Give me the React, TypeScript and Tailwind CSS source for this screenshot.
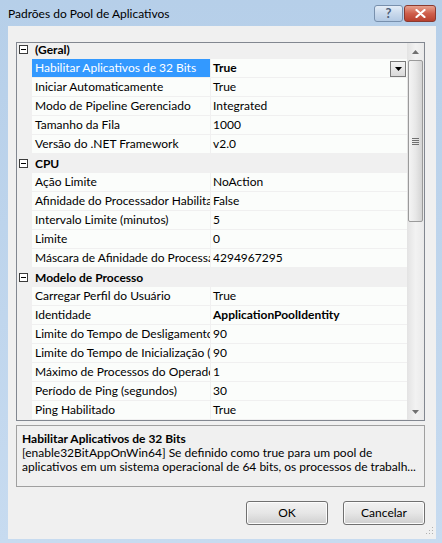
import React from "react"

interface Row {
  cat?: string
  name?: string
  value?: string
  bold?: boolean
  selected?: boolean
}

const rows: Row[] = [
  { cat: "(Geral)" },
  { name: "Habilitar Aplicativos de 32 Bits", value: "True", bold: true, selected: true },
  { name: "Iniciar Automaticamente", value: "True" },
  { name: "Modo de Pipeline Gerenciado", value: "Integrated" },
  { name: "Tamanho da Fila", value: "1000" },
  { name: "Versão do .NET Framework", value: "v2.0" },
  { cat: "CPU" },
  { name: "Ação Limite", value: "NoAction" },
  { name: "Afinidade do Processador Habilitada", value: "False" },
  { name: "Intervalo Limite (minutos)", value: "5" },
  { name: "Limite", value: "0" },
  { name: "Máscara de Afinidade do Processador", value: "4294967295" },
  { cat: "Modelo de Processo" },
  { name: "Carregar Perfil do Usuário", value: "True" },
  { name: "Identidade", value: "ApplicationPoolIdentity", bold: true },
  { name: "Limite do Tempo de Desligamento (segundos)", value: "90" },
  { name: "Limite do Tempo de Inicialização (segundos)", value: "90" },
  { name: "Máximo de Processos do Operador", value: "1" },
  { name: "Período de Ping (segundos)", value: "30" },
  { name: "Ping Habilitado", value: "True" },
]

function Expander() {
  return (
    <div className="w-[9px] h-[9px] border border-[#3c3c3c] bg-white flex items-center justify-center">
      <div className="w-[5px] h-[1px] bg-black" />
    </div>
  )
}

function GridRow({ row }: { row: Row }) {
  if (row.cat) {
    return (
      <div className="h-[19px] shrink-0 bg-[#f0f0f0] flex items-center">
        <div className="ml-[2px] mr-[7px]">
          <Expander />
        </div>
        <span className="font-bold">{row.cat}</span>
      </div>
    )
  }
  return (
    <div className="h-[19px] shrink-0 flex">
      <div className="w-[15px] shrink-0 h-full bg-[#f0f0f0]" />
      <div
        className={`w-[178px] shrink-0 h-full border-b border-[#f0f0f0] pl-[3px] overflow-hidden ${
          row.selected ? "bg-[#3399ff] text-white" : "bg-[#fbfdfb]"
        }`}
      >
        <div className="whitespace-nowrap leading-[18px]">{row.name}</div>
      </div>
      <div className="w-[1px] shrink-0 h-full bg-[#f0f0f0]" />
      <div className="flex-1 min-w-0 h-full border-b border-[#f0f0f0] bg-[#fbfdfb] flex items-center pl-[2px] whitespace-nowrap">
        <span className={`flex-1 ${row.bold ? "font-bold" : ""}`}>{row.value}</span>
        {row.selected && (
          <div className="w-[16px] h-[16px] mr-[1px] mt-[1px] border border-[#7a7a7a] bg-gradient-to-b from-[#f4f4f4] to-[#d9d9d9] flex items-center justify-center">
            <svg width="7" height="4" viewBox="0 0 7 4">
              <path d="M0 0h7L3.5 4z" fill="#000" />
            </svg>
          </div>
        )}
      </div>
    </div>
  )
}

function ScrollBar() {
  return (
    <div className="w-[17px] shrink-0 h-full flex flex-col bg-gradient-to-r from-[#e3e3e3] via-[#f2f2f2] to-[#eaeaea]">
      <div className="h-[17px] shrink-0 flex items-center justify-center">
        <svg width="7" height="4" viewBox="0 0 7 4">
          <path d="M0 4h7L3.5 0z" fill="#707070" />
        </svg>
      </div>
      <div className="h-[162px] shrink-0 mx-[1px] rounded-[2px] border border-[#9a9a9a] bg-gradient-to-r from-[#f4f4f4] via-[#e8e8e8] to-[#d4d4d4] flex items-center justify-center">
        <div className="flex flex-col gap-[1px]">
          <div className="w-[7px] h-[1px] bg-[#707070]" />
          <div className="w-[7px] h-[1px] bg-[#707070]" />
          <div className="w-[7px] h-[1px] bg-[#707070]" />
          <div className="w-[7px] h-[1px] bg-[#707070]" />
        </div>
      </div>
      <div className="flex-1" />
      <div className="h-[17px] shrink-0 flex items-center justify-center">
        <svg width="7" height="4" viewBox="0 0 7 4">
          <path d="M0 0h7L3.5 4z" fill="#707070" />
        </svg>
      </div>
    </div>
  )
}

function Button({ label }: { label: string }) {
  return (
    <div className="w-[82px] h-[24px] rounded-[3px] border border-[#707070] bg-gradient-to-b from-[#f2f2f2] via-[#e6e6e6] to-[#cfcfcf] shadow-[inset_0_0_0_1px_#fcfcfc] flex items-center justify-center">
      {label}
    </div>
  )
}

export default function App() {
  return (
    <div className="w-[442px] h-[543px] bg-gradient-to-b from-[#b6cfe9] to-[#c7dbf0] flex flex-col overflow-hidden text-[12px] text-black font-['Lato','Noto_Sans',sans-serif]">
      <div className="h-[26px] shrink-0 flex items-start pl-[8px] pr-[6px]">
        <span className="flex-1 mt-[6px] leading-[16px]">Padrões do Pool de Aplicativos</span>
        <div className="mt-[5px] flex gap-[1px]">
          <div className="w-[29px] h-[17px] rounded-[3px] border border-[#7890ad] bg-gradient-to-b from-[#e4edf7] via-[#c9d9ec] to-[#b3c9e3] flex items-center justify-center text-[13px] font-bold text-[#4d5f78] leading-none">
            ?
          </div>
          <div className="w-[32px] h-[17px] rounded-[3px] border border-[#8a3a30] bg-gradient-to-b from-[#e6a18f] via-[#cf5f4c] to-[#b8402e] flex items-center justify-center">
            <svg width="11" height="9" viewBox="0 0 11 9">
              <path d="M1.5 1l8 7M9.5 1l-8 7" stroke="#fff" strokeWidth="2.2" strokeLinecap="round" />
            </svg>
          </div>
        </div>
      </div>
      <div className="ml-[8px] w-[428px] flex-1 mb-[4px] bg-[#f0f0f0] flex flex-col pl-[8px] pr-[11px] pt-[16px] pb-[14px] relative">
        <div className="h-[379px] shrink-0 border border-[#828790] bg-white flex overflow-hidden">
          <div className="flex-1 min-w-0 h-full overflow-hidden flex flex-col">
            <div className="-mt-[3px] flex flex-col">
              {rows.map((r, i) => (
                <GridRow key={i} row={r} />
              ))}
            </div>
          </div>
          <ScrollBar />
        </div>
        <div className="mt-[4px] h-[62px] shrink-0 border border-[#a0a0a0] px-[5px] pt-[6px] leading-[14px]">
          <div className="font-bold">Habilitar Aplicativos de 32 Bits</div>
          <div className="whitespace-nowrap">[enable32BitAppOnWin64] Se definido como true para um pool de</div>
          <div className="whitespace-nowrap">aplicativos em um sistema operacional de 64 bits, os processos de trabalh...</div>
        </div>
        <div className="mt-[14px] flex justify-end gap-[15px]">
          <Button label="OK" />
          <Button label="Cancelar" />
        </div>
        <svg className="absolute right-[2px] bottom-[2px]" width="10" height="10" viewBox="0 0 10 10">
          <rect x="8" y="0" width="1" height="1" fill="#b0b0b0" />
          <rect x="5" y="3" width="1" height="1" fill="#b0b0b0" />
          <rect x="8" y="3" width="1" height="1" fill="#b0b0b0" />
          <rect x="2" y="6" width="1" height="1" fill="#b0b0b0" />
          <rect x="5" y="6" width="1" height="1" fill="#b0b0b0" />
          <rect x="8" y="6" width="1" height="1" fill="#b0b0b0" />
        </svg>
      </div>
    </div>
  )
}
